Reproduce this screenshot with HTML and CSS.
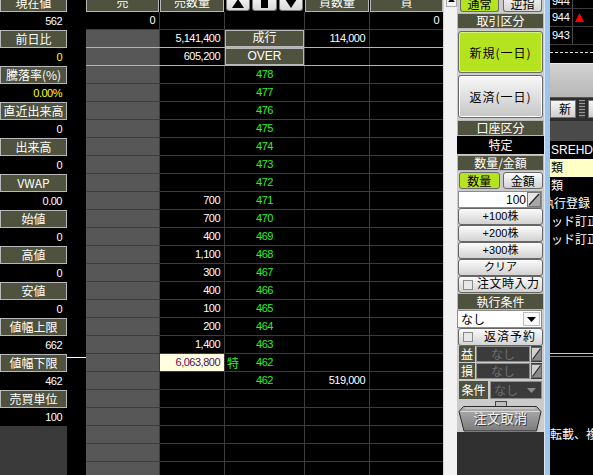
FILE: index.html
```html
<!DOCTYPE html>
<html lang="ja">
<head>
<meta charset="utf-8">
<title>板</title>
<link rel="stylesheet" href="styles.css">
</head>
<body>
<div class="app">
  <aside class="info">
    <div class="lbl">現在値</div><div class="val">562</div>
    <div class="lbl">前日比</div><div class="val yel">0</div>
    <div class="lbl">騰落率(%)</div><div class="val yel">0.00%</div>
    <div class="lbl">直近出来高</div><div class="val">0</div>
    <div class="lbl">出来高</div><div class="val">0</div>
    <div class="lbl">VWAP</div><div class="val">0.00</div>
    <div class="lbl">始値</div><div class="val">0</div>
    <div class="lbl">高値</div><div class="val">0</div>
    <div class="lbl">安値</div><div class="val">0</div>
    <div class="lbl">値幅上限</div><div class="val">662</div>
    <div class="lbl">値幅下限</div><div class="val">462</div>
    <div class="lbl">売買単位</div><div class="val">100</div>
    <div class="info-fill"></div>
  </aside>

  <div class="gutter"><div class="gutter-mark"></div></div>

  <section class="board">
    <div class="bhead">
      <div class="hcell">売</div>
      <div class="hcell">売数量</div>
      <div class="hbtns">
        <span class="hbtn"><svg width="12" height="9" viewBox="0 0 12 9"><path d="M6 0 L12 9 L0 9 Z" fill="#000"/></svg></span>
        <span class="hbtn"><svg width="7" height="11" viewBox="0 0 7 11"><rect width="7" height="11" fill="#000"/></svg></span>
        <span class="hbtn"><svg width="12" height="9" viewBox="0 0 12 9"><path d="M0 0 L12 0 L6 9 Z" fill="#000"/></svg></span>
      </div>
      <div class="hcell">買数量</div>
      <div class="hcell">買</div>
    </div>

    <div class="row"><div class="k n">0</div><div class="k"></div><div class="k"></div><div class="k"></div><div class="k n">0</div></div>
    <div class="row lt"><div class="s"></div><div class="k n">5,141,400</div><div class="plab">成行</div><div class="k n">114,000</div><div class="k"></div></div>
    <div class="row lt"><div class="s"></div><div class="k n">605,200</div><div class="plab">OVER</div><div class="k"></div><div class="k"></div></div>
    <div class="row"><div class="s"></div><div class="k"></div><div class="k p"><span></span><span>478</span><span></span></div><div class="k"></div><div class="k"></div></div>
    <div class="row"><div class="s"></div><div class="k"></div><div class="k p"><span></span><span>477</span><span></span></div><div class="k"></div><div class="k"></div></div>
    <div class="row"><div class="s"></div><div class="k"></div><div class="k p"><span></span><span>476</span><span></span></div><div class="k"></div><div class="k"></div></div>
    <div class="row"><div class="s"></div><div class="k"></div><div class="k p"><span></span><span>475</span><span></span></div><div class="k"></div><div class="k"></div></div>
    <div class="row"><div class="s"></div><div class="k"></div><div class="k p"><span></span><span>474</span><span></span></div><div class="k"></div><div class="k"></div></div>
    <div class="row"><div class="s"></div><div class="k"></div><div class="k p"><span></span><span>473</span><span></span></div><div class="k"></div><div class="k"></div></div>
    <div class="row"><div class="s"></div><div class="k"></div><div class="k p"><span></span><span>472</span><span></span></div><div class="k"></div><div class="k"></div></div>
    <div class="row"><div class="s"></div><div class="k n">700</div><div class="k p"><span></span><span>471</span><span></span></div><div class="k"></div><div class="k"></div></div>
    <div class="row"><div class="s"></div><div class="k n">700</div><div class="k p"><span></span><span>470</span><span></span></div><div class="k"></div><div class="k"></div></div>
    <div class="row"><div class="s"></div><div class="k n">400</div><div class="k p"><span></span><span>469</span><span></span></div><div class="k"></div><div class="k"></div></div>
    <div class="row"><div class="s"></div><div class="k n">1,100</div><div class="k p"><span></span><span>468</span><span></span></div><div class="k"></div><div class="k"></div></div>
    <div class="row"><div class="s"></div><div class="k n">300</div><div class="k p"><span></span><span>467</span><span></span></div><div class="k"></div><div class="k"></div></div>
    <div class="row"><div class="s"></div><div class="k n">400</div><div class="k p"><span></span><span>466</span><span></span></div><div class="k"></div><div class="k"></div></div>
    <div class="row"><div class="s"></div><div class="k n">100</div><div class="k p"><span></span><span>465</span><span></span></div><div class="k"></div><div class="k"></div></div>
    <div class="row"><div class="s"></div><div class="k n">200</div><div class="k p"><span></span><span>464</span><span></span></div><div class="k"></div><div class="k"></div></div>
    <div class="row"><div class="s"></div><div class="k n">1,400</div><div class="k p"><span></span><span>463</span><span></span></div><div class="k"></div><div class="k"></div></div>
    <div class="row"><div class="s"></div><div class="hl n">6,063,800</div><div class="k p"><span class="tok">特</span><span>462</span><span></span></div><div class="k"></div><div class="k"></div></div>
    <div class="row"><div class="s"></div><div class="k"></div><div class="k p"><span></span><span>462</span><span></span></div><div class="k n">519,000</div><div class="k"></div></div>
    <div class="row"><div class="s"></div><div class="k"></div><div class="k"></div><div class="k"></div><div class="k"></div></div>
    <div class="row"><div class="s"></div><div class="k"></div><div class="k"></div><div class="k"></div><div class="k"></div></div>
    <div class="row"><div class="s"></div><div class="k"></div><div class="k"></div><div class="k"></div><div class="k"></div></div>
    <div class="row"><div class="s"></div><div class="k"></div><div class="k"></div><div class="k"></div><div class="k"></div></div>
    <div class="row"><div class="s"></div><div class="k"></div><div class="k"></div><div class="k"></div><div class="k"></div></div>
  </section>

  <div class="vscroll">
    <div class="vscroll-up"><svg width="7" height="4" viewBox="0 0 7 4"><path d="M3.5 0 L7 4 L0 4 Z" fill="#000"/></svg></div>
  </div>

  <section class="order">
    <div class="tabs mb1"><span class="tab on">通常</span><span class="tab">逆指</span></div>
    <div class="olbl mb2">取引区分</div>
    <div class="big new mb2">新規(一日)</div>
    <div class="big ret mb2">返済(一日)</div>
    <div class="olbl">口座区分</div>
    <div class="acct mb1">特定</div>
    <div class="olbl mb1">数量/金額</div>
    <div class="toggles mb2"><span class="tgl on">数量</span><span class="tgl">金額</span></div>
    <div class="qty mb3"><span class="qty-v">100</span><span class="spin"><svg width="14" height="15" viewBox="0 0 14 15"><rect x="0.5" y="0.5" width="13" height="14" fill="#e6e6e6" stroke="#777"/><path d="M13 1 L13 14 L1 14 Z" fill="#a8a8a8"/><path d="M2 13 L12 2" stroke="#222" stroke-width="1.2"/></svg></span></div>
    <div class="btn mb2">+100株</div>
    <div class="btn mb1">+200株</div>
    <div class="btn mb2">+300株</div>
    <div class="btn mb1">クリア</div>
    <div class="btn chk"><span class="box"></span><span>注文時入力</span></div>
    <div class="olbl tall">執行条件</div>
    <div class="sel mb1"><span class="sel-v">なし</span><span class="sel-arrow"><svg width="9" height="5" viewBox="0 0 9 5"><path d="M0 0 L9 0 L4.5 5 Z" fill="#000"/></svg></span></div>
    <div class="btn chk tall mb1"><span class="box"></span><span class="chk-t">返済予約</span></div>
    <div class="prow mb1"><span class="plbl">益</span><span class="pin">なし</span><span class="spin dk"><svg width="11" height="14" viewBox="0 0 11 14"><rect x="0.5" y="0.5" width="10" height="13" fill="#d0d0d0" stroke="#666"/><path d="M10 1 L10 13 L1 13 Z" fill="#8a8a8a"/><path d="M1.5 12.5 L9.5 1.5" stroke="#222" stroke-width="1.1"/></svg></span></div>
    <div class="prow mb2"><span class="plbl">損</span><span class="pin">なし</span><span class="spin dk"><svg width="11" height="14" viewBox="0 0 11 14"><rect x="0.5" y="0.5" width="10" height="13" fill="#d0d0d0" stroke="#666"/><path d="M10 1 L10 13 L1 13 Z" fill="#8a8a8a"/><path d="M1.5 12.5 L9.5 1.5" stroke="#222" stroke-width="1.1"/></svg></span></div>
    <div class="prow cond mb2"><span class="plbl wide">条件</span><span class="psel"><span>なし</span><svg width="9" height="5" viewBox="0 0 9 5"><path d="M0 0 L9 0 L4.5 5 Z" fill="#8a8a8a"/></svg></span></div>
    <div class="cancel">
      <svg class="cancel-bg" width="84" height="31" viewBox="0 0 84 31">
        <defs><linearGradient id="cg" x1="0" y1="0" x2="0" y2="1"><stop offset="0" stop-color="#b0b0b0"/><stop offset="1" stop-color="#7c7c7c"/></linearGradient></defs>
        <rect x="37.5" y="0.5" width="11" height="5" fill="#bdbdbd" stroke="#444"/>
        <path d="M5.5 5.5 L78.5 5.5 L83 10.5 L78.5 30 L6 30 L1 10.5 Z" fill="url(#cg)" stroke="#2a2a2a"/>
        <path d="M2.5 10.5 L81.5 10.5" stroke="#d8d8d8"/>
        <path d="M7 7 L77 7" stroke="#e0e0e0"/>
      </svg>
      <span class="cancel-t">注文取消</span>
    </div>
    <div class="order-fill"></div>
  </section>

  <div class="edge"></div>

  <section class="other">
    <div class="q first"><span class="q-v">944</span><span class="q-m"></span></div>
    <div class="q"><span class="q-v">944</span><span class="q-m"><svg width="9" height="9" viewBox="0 0 9 9"><path d="M4.5 0 L9 9 L0 9 Z" fill="#ff0000"/></svg></span></div>
    <div class="q"><span class="q-v">943</span><span class="q-m"></span></div>
    <div class="dash"></div>
    <div class="o-grey"></div>
    <div class="o-btns"><span class="o-btn">新</span><span class="o-grip"></span><span class="o-btn"></span></div>
    <div class="o-bar"></div>
    <div class="o-row">SREHD</div>
    <div class="o-row yl">類</div>
    <div class="o-row">類</div>
    <div class="o-row cut">執行登録</div>
    <div class="o-row">ッド訂正</div>
    <div class="o-row">ッド訂正</div>
    <div class="o-dbl"></div>
    <div class="o-note">転載、複製</div>
  </section>
</div>
</body>
</html>
```

FILE: styles.css
```css
* { box-sizing: border-box; }

html, body {
  margin: 0;
  padding: 0;
  background: #000;
}

body {
  width: 593px;
  height: 475px;
  overflow: hidden;
  font-family: "Noto Sans CJK JP", sans-serif;
  color: #fff;
}

.app {
  display: flex;
  margin-top: -6px;
  height: 481px;
}

/* ---------- left info panel ---------- */
.info {
  width: 67px;
  display: flex;
  flex-direction: column;
  flex: none;
}

.lbl {
  height: 18px;
  background: #4e523e;
  border: 1px solid #b9b9b9;
  color: #fff;
  font-size: 12px;
  line-height: 16px;
  text-align: center;
  white-space: nowrap;
}

.val {
  height: 18px;
  background: #000;
  font-family: "Liberation Sans", sans-serif;
  font-size: 11px;
  letter-spacing: -0.5px;
  line-height: 18px;
  text-align: right;
  padding-right: 5px;
  color: #fff;
}

.val.yel { color: #ffff00; }

.info-fill {
  flex: 1;
  background: #3a3a3a;
}

.gutter {
  width: 19px;
  flex: none;
  background: #000;
  padding-top: 363px;
}

.gutter-mark {
  height: 1px;
  background: #fff;
}

/* ---------- board ---------- */
.board {
  width: 357px;
  flex: none;
  display: flex;
  flex-direction: column;
  overflow: hidden;
}

.bhead {
  display: grid;
  grid-template-columns: 73px 64px 79px 64px 73px;
  column-gap: 1px;
  height: 18px;
  background: #000;
  flex: none;
}

.hcell {
  background: #4e523e;
  border: 1px solid #b9b9b9;
  border-top: none;
  font-size: 12px;
  line-height: 16px;
  text-align: center;
  color: #fff;
}

.hbtns {
  display: flex;
  gap: 2px;
  padding: 0 1px;
  height: 17px;
}

.hbtn {
  flex: 1;
  background: linear-gradient(#fbfbfb, #d9d9d9);
  border: 1px solid #7a7a7a;
  border-top: none;
  border-radius: 0 0 3px 3px;
  display: flex;
  align-items: flex-end;
  justify-content: center;
  padding-bottom: 2px;
}

.row {
  display: grid;
  grid-template-columns: 73px 64px 79px 64px 73px;
  column-gap: 1px;
  height: 18px;
  flex: none;
  background: #3c3c3c;
  border-bottom: 1px solid #3c3c3c;
}

.row.lt { border-bottom-color: #b4b4b4; }

.k { background: #000; }
.s { background: #575757; }

.n {
  font-family: "Liberation Sans", sans-serif;
  font-size: 11px;
  letter-spacing: -0.5px;
  line-height: 17px;
  text-align: right;
  padding-right: 4px;
  color: #fff;
}

.hl {
  background: #ffffe0;
  color: #5c0a55;
}

.plab {
  background: #4e523e;
  border: 1px solid #b9b9b9;
  font-family: "Liberation Sans", "Noto Sans CJK JP", sans-serif;
  font-size: 12px;
  line-height: 15px;
  text-align: center;
  color: #fff;
}

.p {
  display: grid;
  grid-template-columns: 1fr auto 1fr;
  align-items: center;
  font-family: "Liberation Sans", sans-serif;
  font-size: 11px;
  letter-spacing: -0.5px;
  line-height: 17px;
  color: #2df02d;
}

.tok {
  font-family: "Noto Sans CJK JP", sans-serif;
  font-size: 12px;
  letter-spacing: 0;
  padding-left: 2px;
  color: #2df02d;
}

/* ---------- scrollbar ---------- */
.vscroll {
  width: 14px;
  flex: none;
  background: #f2f2f2;
  border-left: 1px solid #d6d6d6;
  padding-left: 2px;
}

.vscroll-up {
  width: 11px;
  height: 13px;
  background: #f4f4f4;
  border: 1px solid #a8a8a8;
  border-top: none;
  display: flex;
  align-items: flex-end;
  justify-content: center;
  padding-bottom: 4px;
}

/* ---------- order panel ---------- */
.order {
  width: 87px;
  flex: none;
  display: flex;
  flex-direction: column;
  background: #cbcbcb;
  color: #000;
}

.mb1 { margin-bottom: 1px; }
.mb2 { margin-bottom: 2px; }
.mb3 { margin-bottom: 3px; }

.tabs {
  height: 18px;
  display: flex;
  gap: 4px;
  padding: 0 2px 0 3px;
  flex: none;
}

.tab {
  flex: 1;
  border: 1px solid #6a6a6a;
  border-top: none;
  border-radius: 0 0 3px 3px;
  background: linear-gradient(#fafafa, #d4d4d4);
  font-size: 12px;
  line-height: 16px;
  text-align: center;
  padding-top: 2px;
}

.tab.on {
  background: #b6e31f;
}

.olbl {
  height: 16px;
  flex: none;
  background: #4e523e;
  border: 1px solid #b9b9b9;
  color: #fff;
  font-size: 12px;
  line-height: 14px;
  text-align: center;
}

.olbl.tall { height: 17px; line-height: 15px; }

.big {
  margin-left: 1px;
  margin-right: 1px;
  flex: none;
  display: flex;
  align-items: center;
  justify-content: center;
  border: 1px solid #6a6a6a;
  border-radius: 3px;
  font-size: 12px;
  letter-spacing: 1px;
}

.big.new {
  height: 42px;
  background: #b6e31f;
  box-shadow: inset 0 0 0 1px #d6f27a;
}

.big.ret {
  height: 43px;
  background: linear-gradient(#f8f8f8, #c6c6c6);
  box-shadow: inset 0 0 0 1px #ffffff;
}

.acct {
  height: 18px;
  flex: none;
  background: #000;
  color: #fff;
  font-size: 12px;
  line-height: 18px;
  text-align: center;
}

.toggles {
  height: 17px;
  flex: none;
  display: flex;
  gap: 3px;
  padding: 0 1px 0 2px;
}

.tgl {
  flex: 1;
  border: 1px solid #6a6a6a;
  border-radius: 3px;
  background: linear-gradient(#fafafa, #d2d2d2);
  font-size: 12px;
  line-height: 15px;
  text-align: center;
}

.tgl.on { background: #b6e31f; }

.qty {
  height: 17px;
  flex: none;
  margin: 0 2px 0 1px;
  background: #fff;
  border: 1px solid #8a8a8a;
  display: flex;
  align-items: center;
}

.qty-v {
  flex: 1;
  text-align: right;
  font-family: "Liberation Sans", sans-serif;
  font-size: 12px;
  padding-right: 1px;
}

.spin {
  display: flex;
  align-items: center;
}

.btn {
  height: 17px;
  flex: none;
  margin: 0 1px;
  border: 1px solid #666;
  border-radius: 3px;
  background: linear-gradient(#fbfbfb, #d2d2d2);
  font-family: "Liberation Sans", "Noto Sans CJK JP", sans-serif;
  font-size: 11px;
  line-height: 15px;
  text-align: center;
}

.btn.tall { height: 18px; line-height: 16px; }

.btn.chk {
  display: flex;
  align-items: center;
  padding-left: 4px;
  gap: 4px;
  font-size: 12px;
  letter-spacing: 0.5px;
  text-align: left;
}

.box {
  width: 10px;
  height: 10px;
  flex: none;
  border: 1px solid #8a8a8a;
  background: #e8e8e8;
}

.chk-t { padding-left: 7px; letter-spacing: 1px; }

.sel {
  height: 18px;
  flex: none;
  margin: 0 2px 0 0;
  background: #fff;
  border: 1px solid #8a8a8a;
  display: flex;
  align-items: center;
}

.sel-v {
  flex: 1;
  font-size: 12px;
  padding-left: 3px;
  line-height: 16px;
}

.sel-arrow {
  width: 17px;
  height: 14px;
  margin-right: 1px;
  border: 1px solid #bdbdbd;
  background: #fafafa;
  display: flex;
  align-items: center;
  justify-content: center;
}

.prow {
  height: 16px;
  flex: none;
  display: flex;
  align-items: stretch;
  padding: 0 2px 0 2px;
  gap: 1px;
}

.prow.cond { height: 18px; gap: 2px; }

.plbl {
  width: 16px;
  flex: none;
  background: #4e523e;
  color: #fff;
  font-size: 12px;
  line-height: 16px;
  text-align: center;
}

.plbl.wide { width: 29px; line-height: 18px; }

.pin {
  flex: 1;
  background: #3b3b3b;
  border: 1px solid #8e8e8e;
  color: #6e6e6e;
  font-size: 12px;
  line-height: 14px;
  text-align: center;
}

.spin.dk {
  background: #3b3b3b;
}

.psel {
  flex: 1;
  background: #3b3b3b;
  border: 1px solid #8e8e8e;
  color: #6e6e6e;
  font-size: 12px;
  line-height: 16px;
  display: flex;
  align-items: center;
  justify-content: space-between;
  padding: 0 5px 0 3px;
}

.cancel {
  position: relative;
  height: 31px;
  flex: none;
  margin: 0 1px;
  display: flex;
  justify-content: center;
  padding-top: 9px;
}

.cancel-bg {
  position: absolute;
  left: 0;
  top: 0;
}

.cancel-t {
  position: relative;
  color: #f4f4f4;
  font-size: 13px;
  line-height: 16px;
  letter-spacing: 0.5px;
  text-shadow: 1px 1px 0 #3a3a3a;
}

.order-fill {
  flex: 1;
  background: #303030;
}

/* ---------- blue edge ---------- */
.edge {
  width: 6px;
  flex: none;
  background: #9fc6ea;
  border-left: 1px solid #dbe9f6;
}

/* ---------- other window ---------- */
.other {
  width: 43px;
  flex: none;
  display: flex;
  flex-direction: column;
  overflow: hidden;
  background: #000;
}

.q {
  height: 18px;
  flex: none;
  display: flex;
  border-bottom: 1px solid #3c3c3c;
}

.q.first { height: 15px; }

.q-v {
  width: 23px;
  border-right: 1px solid #4a4a4a;
  font-family: "Liberation Sans", sans-serif;
  font-size: 11px;
  letter-spacing: -0.3px;
  line-height: 17px;
  padding-left: 2px;
  display: flex;
  align-items: flex-end;
  color: #fff;
}

.q.first .q-v { line-height: 13px; }

.q-m {
  flex: 1;
  display: flex;
  align-items: center;
  padding-left: 2px;
}

.dash {
  height: 11px;
  flex: none;
  margin-top: 7px;
  border-top: 1px dashed #e0e0e0;
}

.o-grey {
  height: 35px;
  flex: none;
  background: linear-gradient(#d2d2d2, #b6b6b6);
  border-top: 1px solid #ececec;
  border-bottom: 1px solid #555;
}

.o-btns {
  height: 22px;
  flex: none;
  display: flex;
  gap: 3px;
  padding: 2px 0;
  background: #2e2e2e;
}

.o-btn {
  width: 26px;
  flex: none;
  background: linear-gradient(#f6f6f6, #cfcfcf);
  border: 1px solid #777;
  color: #000;
  font-size: 12px;
  line-height: 16px;
  text-align: right;
  overflow: hidden;
  padding-right: 4px;
}

.o-grip {
  width: 6px;
  flex: none;
  background: repeating-linear-gradient(#9a9a9a 0 1px, #3a3a3a 1px 3px);
}

.o-bar {
  height: 21px;
  flex: none;
  background: #4a4a4a;
  border-top: 1px solid #2a2a2a;
}

.o-row {
  height: 18px;
  flex: none;
  font-family: "Liberation Sans", "Noto Sans CJK JP", sans-serif;
  font-size: 12px;
  line-height: 18px;
  padding-left: 1px;
  white-space: nowrap;
  color: #fff;
}

.o-row.yl {
  background: #ffffc6;
  color: #000;
}

.o-row.cut { text-indent: -9px; }

.o-dbl {
  height: 4px;
  flex: none;
  margin-top: 104px;
  border-top: 1px solid #c8c8c8;
  border-bottom: 1px solid #8c8c8c;
}

.o-note {
  margin-top: 70px;
  height: 14px;
  flex: none;
  font-size: 12px;
  line-height: 14px;
  white-space: nowrap;
  color: #fff;
}
```
